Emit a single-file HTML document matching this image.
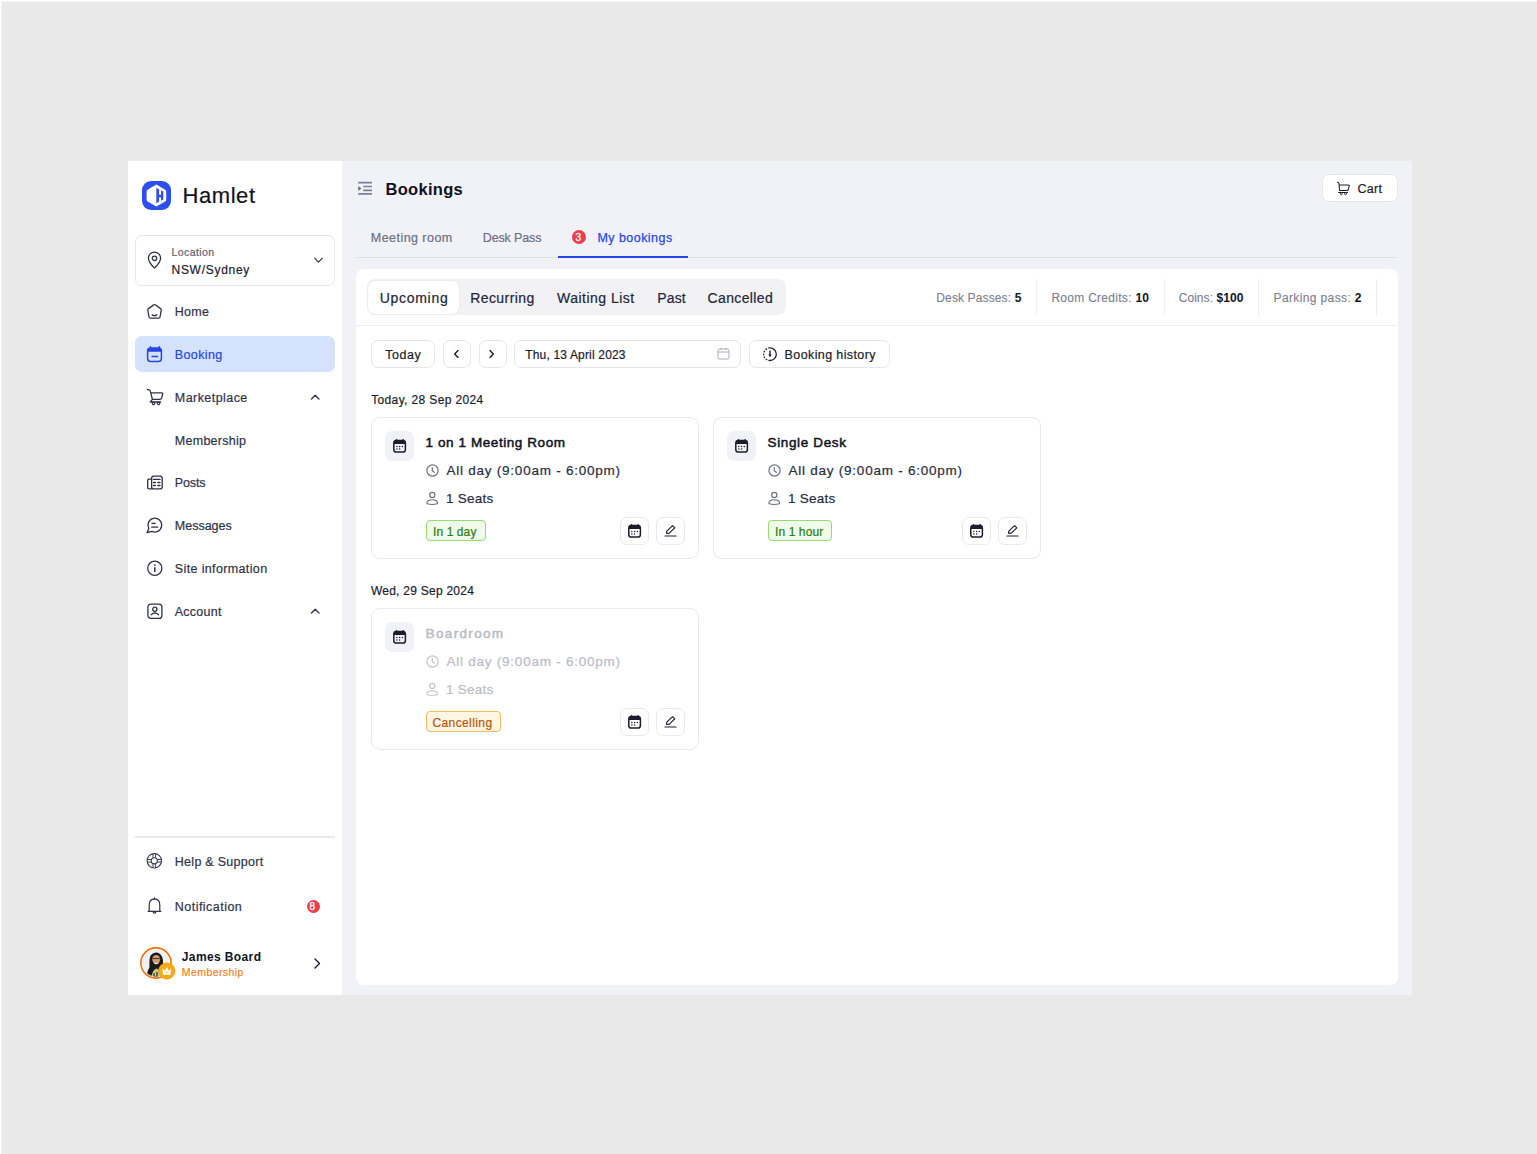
<!DOCTYPE html>
<html><head><meta charset="utf-8">
<style>
*{box-sizing:border-box;margin:0;padding:0}
html,body{width:1537px;height:1154px;overflow:hidden}
body{background:#e9e9e9;font-family:"Liberation Sans",sans-serif;position:relative}
.abs{position:absolute}
.t{position:absolute;white-space:nowrap;line-height:1;-webkit-text-stroke:0.2px currentColor}
svg{position:absolute;overflow:visible}
</style></head><body>
<div class="abs" style="left:0px;top:0px;width:1537px;height:1px;background:#ffffff;"></div>
<div class="abs" style="left:0px;top:1px;width:1537px;height:1px;background:#f4f4f4;"></div>
<div class="abs" style="left:0px;top:0px;width:1px;height:1154px;background:#ffffff;"></div>
<div class="abs" style="left:1px;top:1px;width:1px;height:1153px;background:#f4f4f4;"></div>
<div class="abs" style="left:128px;top:161px;width:214px;height:834px;background:#ffffff;"></div>
<div class="abs" style="left:342px;top:161px;width:1070px;height:834px;background:#f1f2f8;"></div>
<svg style="left:142px;top:181px" width="29" height="29" viewBox="0 0 29 29" fill="none"><rect x="0" y="0" width="29" height="29" rx="9" fill="#2e4ff0"/>
<path d="M14.4 3.6 L23.2 8.7 Q24.2 9.3 24.2 10.4 L24.2 18.7 Q24.2 19.8 23.2 20.4 L14.4 25.5 L5.6 20.4 Q4.6 19.8 4.6 18.7 L4.6 10.4 Q4.6 9.3 5.6 8.7 Z" fill="#fff"/>
<path d="M14.3 6.8 L17.1 8.4 L17.1 20.6 L14.3 22.2 Z" fill="#2e4ff0"/>
<path d="M19 9.4 L21.3 10.6 L21.3 18.6 L19 19.8 Z" fill="#2e4ff0"/>
<rect x="16.5" y="13.8" width="3" height="2.6" fill="#2e4ff0"/></svg>
<div class="t" style="left:182.5px;top:184.98px;font-size:22px;color:#111322;letter-spacing:0.563px;">Hamlet</div>
<div class="abs" style="left:135px;top:235px;width:200px;height:51px;background:#fff;border:1px solid #e6e7ee;border-radius:7px;"></div>
<svg style="left:147px;top:251px" width="15" height="18" viewBox="0 0 15 18" fill="none"><path d="M7.5 17 C7.5 17 13.6 11.2 13.6 7.2 A6.1 6.1 0 0 0 1.4 7.2 C1.4 11.2 7.5 17 7.5 17Z" stroke="#2f3245" stroke-width="1.3" stroke-linejoin="round"/>
<circle cx="7.5" cy="7.3" r="2.2" stroke="#2f3245" stroke-width="1.3"/></svg>
<div class="t" style="left:171.5px;top:246.51px;font-size:10.5px;color:#5c5f72;letter-spacing:0.429px;">Location</div>
<div class="t" style="left:171.5px;top:263.74px;font-size:12px;color:#1b1d2c;letter-spacing:0.716px;">NSW/Sydney</div>
<svg style="left:313px;top:256px" width="11" height="9" viewBox="0 0 11 9" fill="none"><path d="M1.7 2.2 L5.5 6.2 L9.3 2.2" stroke="#2f3245" stroke-width="1.1" stroke-linecap="round" stroke-linejoin="round"/></svg>
<div class="abs" style="left:135px;top:336px;width:200px;height:36px;background:#d5e2fd;border-radius:7px;"></div>
<div class="t" style="left:174.8px;top:306.22px;font-size:12.5px;color:#2f3245;letter-spacing:0.286px;">Home</div>
<div class="t" style="left:174.8px;top:348.92px;font-size:12.5px;color:#2545e6;letter-spacing:0.372px;">Booking</div>
<div class="t" style="left:174.8px;top:391.72px;font-size:12.5px;color:#2f3245;letter-spacing:0.442px;">Marketplace</div>
<div class="t" style="left:174.8px;top:434.52px;font-size:12.5px;color:#2f3245;letter-spacing:0.270px;">Membership</div>
<div class="t" style="left:174.8px;top:477.32px;font-size:12.5px;color:#2f3245;letter-spacing:-0.116px;">Posts</div>
<div class="t" style="left:174.8px;top:520.12px;font-size:12.5px;color:#2f3245;">Messages</div>
<div class="t" style="left:174.8px;top:562.92px;font-size:12.5px;color:#2f3245;letter-spacing:0.364px;">Site information</div>
<div class="t" style="left:174.8px;top:605.72px;font-size:12.5px;color:#2f3245;letter-spacing:0.239px;">Account</div>
<div class="t" style="left:174.8px;top:856.02px;font-size:12.5px;color:#2f3245;letter-spacing:0.279px;">Help &amp; Support</div>
<div class="t" style="left:174.8px;top:900.62px;font-size:12.5px;color:#2f3245;letter-spacing:0.470px;">Notification</div>
<svg style="left:146px;top:303px" width="17" height="17" viewBox="0 0 17 17" fill="none"><path d="M7.3 2.1 Q8.5 1.2 9.7 2.1 L14.5 5.6 Q15.4 6.3 15.2 7.4 L14 14 Q13.8 15.1 12.7 15.1 L4.3 15.1 Q3.2 15.1 3 14 L1.8 7.4 Q1.6 6.3 2.5 5.6 Z" stroke="#2f3245" stroke-width="1.3" stroke-linejoin="round"/><path d="M6.2 11.9 Q8.5 13.4 10.8 11.9" stroke="#2f3245" stroke-width="1.3" stroke-linecap="round" stroke-linejoin="round"/></svg>
<svg style="left:146px;top:346px" width="17" height="17" viewBox="0 0 17 17" fill="none"><rect x="1.6" y="1.9" width="13.8" height="13.6" rx="3" stroke="#2545e6" stroke-width="1.5"/>
<path d="M1.6 4.9 Q1.6 1.9 4.6 1.9 L12.4 1.9 Q15.4 1.9 15.4 4.9 L15.4 5.8 L1.6 5.8 Z" fill="#2545e6"/>
<rect x="3.7" y="0" width="1.5" height="3" rx=".7" fill="#2545e6"/><rect x="12.6" y="0" width="1.5" height="3" rx=".7" fill="#2545e6"/>
<path d="M6 10.5 L11.6 10.5" stroke="#2545e6" stroke-width="1.4" stroke-linecap="round"/></svg>
<svg style="left:146px;top:388px" width="18" height="18" viewBox="0 0 18 18" fill="none"><path d="M1.3 1.6 Q4.2 1.2 4.5 3.9 L6.4 11.4 M5 4.8 L15.8 4.8 Q17 4.9 16.6 6.3 L15.8 9.6 Q15.3 11.4 13.7 11.4 L6.4 11.4 L4.3 14 L14.6 14" stroke="#2f3245" stroke-width="1.3" stroke-linecap="round" stroke-linejoin="round"/><circle cx="7.6" cy="15.4" r="1.2" stroke="#2f3245" stroke-width="1.2" fill="#fff"/><circle cx="12.6" cy="15.4" r="1.2" stroke="#2f3245" stroke-width="1.2" fill="#fff"/></svg>
<svg style="left:310px;top:393px" width="11" height="8" viewBox="0 0 11 8" fill="none"><path d="M1.5 6 L5.2 2.2 L9 6" stroke="#2f3245" stroke-width="1.3" stroke-linecap="round" stroke-linejoin="round"/></svg>
<svg style="left:310px;top:607px" width="11" height="8" viewBox="0 0 11 8" fill="none"><path d="M1.5 6 L5.2 2.2 L9 6" stroke="#2f3245" stroke-width="1.3" stroke-linecap="round" stroke-linejoin="round"/></svg>
<svg style="left:146px;top:474px" width="18" height="17" viewBox="0 0 18 17" fill="none"><rect x="5.6" y="2.2" width="10.6" height="12.7" rx="2.2" stroke="#2f3245" stroke-width="1.3" stroke-linecap="round" stroke-linejoin="round"/><path d="M5.6 5.1 L3 5.1 Q1.7 5.1 1.7 6.4 L1.7 13.6 Q1.7 14.9 3.1 14.9 L5.6 14.9" stroke="#2f3245" stroke-width="1.3" stroke-linecap="round" stroke-linejoin="round"/><path d="M7.4 5.4 L14 5.4 M7.4 8.5 L9.5 8.5 M11.8 8.5 L14 8.5 M7.4 11.5 L9.5 11.5 M11.8 11.5 L14 11.5" stroke="#2f3245" stroke-width="1.3" stroke-linecap="round" stroke-linejoin="round"/></svg>
<svg style="left:146px;top:517px" width="18" height="17" viewBox="0 0 18 17" fill="none"><path d="M1.1 15.5 L2.82 11.55 A6.9 6.9 0 1 1 5.88 14.35 Z" stroke="#2f3245" stroke-width="1.3" stroke-linecap="round" stroke-linejoin="round"/><path d="M6.1 6.4 L9.2 6.4 M5.7 10.2 L11.7 10.2" stroke="#2f3245" stroke-width="1.3" stroke-linecap="round" stroke-linejoin="round"/></svg>
<svg style="left:146px;top:560px" width="17" height="17" viewBox="0 0 17 17" fill="none"><circle cx="8.8" cy="8.2" r="7.1" stroke="#2f3245" stroke-width="1.3" stroke-linecap="round" stroke-linejoin="round"/><path d="M8.8 7.7 L8.8 11.6" stroke="#2f3245" stroke-width="1.5" stroke-linecap="round"/><circle cx="8.8" cy="5.1" r=".85" fill="#2f3245"/></svg>
<svg style="left:146px;top:603px" width="17" height="17" viewBox="0 0 17 17" fill="none"><rect x="1.9" y="1.2" width="14" height="14.2" rx="3" stroke="#2f3245" stroke-width="1.3" stroke-linecap="round" stroke-linejoin="round"/><circle cx="8.8" cy="6.3" r="2.1" stroke="#2f3245" stroke-width="1.3" stroke-linecap="round" stroke-linejoin="round"/><path d="M5.2 11.7 Q8.8 8.4 12.5 11.7" stroke="#2f3245" stroke-width="1.3" stroke-linecap="round" stroke-linejoin="round"/></svg>
<div class="abs" style="left:135px;top:836px;width:200px;height:1.5px;background:#e8e9ee;"></div>
<svg style="left:146px;top:852px" width="17" height="17" viewBox="0 0 17 17" fill="none"><circle cx="8.3" cy="8.8" r="7.2" stroke="#3a3d52" stroke-width="1.15"/><circle cx="8.3" cy="8.8" r="3.1" stroke="#3a3d52" stroke-width="1.15"/><path d="M7 1.7 L7 5.8 M9.6 1.7 L9.6 5.8 M7 11.8 L7 15.9 M9.6 11.8 L9.6 15.9 M1.2 7.5 L5.3 7.5 M1.2 10.1 L5.3 10.1 M11.3 7.5 L15.4 7.5 M11.3 10.1 L15.4 10.1" stroke="#3a3d52" stroke-width="1"/></svg>
<svg style="left:147px;top:897px" width="15" height="18" viewBox="0 0 15 18" fill="none"><path d="M7.5 1.8 Q12.8 2 12.8 8 L12.8 13.6 L13.8 14.4 L1.2 14.4 L2.2 13.6 L2.2 8 Q2.2 2 7.5 1.8 Z" stroke="#2f3245" stroke-width="1.2" stroke-linejoin="round"/><path d="M7.5 0.9 L7.5 1.9" stroke="#2f3245" stroke-width="1.2" stroke-linecap="round"/><path d="M6 14.9 Q7.5 17.4 9 14.9" stroke="#2f3245" stroke-width="1.1"/></svg>
<div class="abs" style="left:306.5px;top:899.5px;width:13px;height:13px;background:#ef3b4b;border-radius:7px;"></div>
<div class="t" style="left:309.6px;top:901.53px;font-size:10px;color:#ffffff;-webkit-text-stroke:0.3px #fff;">8</div>
<svg style="left:140px;top:946.5px" width="32" height="32" viewBox="0 0 32 32" fill="none"><defs><clipPath id="av"><circle cx="16" cy="16" r="13.6"/></clipPath></defs>
<circle cx="16" cy="16" r="15.1" fill="#fff" stroke="#f3700c" stroke-width="1.6"/>
<g clip-path="url(#av)"><rect width="32" height="32" fill="#eef0f2"/>
<path d="M6 32 Q7 24 9.5 20 Q9 12 10.5 8.5 Q15 3.5 20 7 Q23.5 10 23 17 Q25 21 25.5 32 Z" fill="#1c1a1a"/>
<ellipse cx="16.2" cy="12.6" rx="3.9" ry="4.6" fill="#d39a72"/>
<path d="M12.6 11.6 L19.8 11.6" stroke="#3a3330" stroke-width="1"/>
<path d="M14 16 Q16.2 17.6 18.4 16" stroke="#fff" stroke-width=".9"/>
<path d="M11 32 Q12 23 16.5 21.5 Q20 22.5 21 32 Z" fill="#c7c98a"/>
<path d="M14 26 L14 32 M17 25 L17 32" stroke="#2a2a24" stroke-width="1.2"/></g></svg>
<svg style="left:157.5px;top:962px" width="18" height="18" viewBox="0 0 18 18" fill="none"><circle cx="8.8" cy="9" r="8.6" fill="#f9a818"/><path d="M5.2 12.4 L4.8 7.2 L7.3 9 L8.8 5.6 L10.3 9 L12.8 7.2 L12.4 12.4 Z" fill="#fff" stroke="#fff" stroke-width=".6" stroke-linejoin="round"/><circle cx="8.8" cy="10.3" r=".8" fill="#f9a818"/></svg>
<div class="t" style="left:181.8px;top:950.64px;font-size:12px;color:#111322;font-weight:bold;-webkit-text-stroke:0;letter-spacing:0.383px;">James Board</div>
<div class="t" style="left:181.8px;top:966.91px;font-size:10.5px;color:#f0841a;letter-spacing:0.426px;">Membership</div>
<svg style="left:312px;top:957px" width="10" height="13" viewBox="0 0 10 13" fill="none"><path d="M3 2 L7.5 6.5 L3 11" stroke="#111322" stroke-width="1.3" stroke-linecap="round" stroke-linejoin="round"/></svg>
<svg style="left:357px;top:181px" width="16" height="15" viewBox="0 0 16 15" fill="none"><path d="M1.2 1.7 L15 1.7 M6.2 5.5 L15 5.5 M6.2 9.3 L15 9.3 M1.2 12.9 L15 12.9" stroke="#7b7f93" stroke-width="1.7"/><path d="M1.2 4.9 L4.5 7.4 L1.2 9.9 Z" fill="#6b6f83"/></svg>
<div class="t" style="left:385.5px;top:181.03px;font-size:16.5px;color:#0f1120;font-weight:bold;-webkit-text-stroke:0;letter-spacing:0.291px;">Bookings</div>
<div class="abs" style="left:1322.3px;top:174.2px;width:75.3px;height:28px;background:#ffffff;border:1px solid #e6e7ee;border-radius:7px;"></div>
<svg style="left:1336px;top:181px" width="15" height="15" viewBox="0 0 15 15" fill="none"><path d="M1.3 1.3 Q2.7 1.2 3 2.8 L3.6 9.6 M3.2 4 L12.6 4 Q13.5 4.1 13.2 5 L12.5 8 Q12.1 9.5 10.6 9.5 L3.6 9.5 M2.6 11.4 L11.6 11.4" stroke="#1b1d2c" stroke-width="1.05" stroke-linecap="round" stroke-linejoin="round"/><circle cx="5.3" cy="12.7" r="1" stroke="#1b1d2c" stroke-width=".9"/><circle cx="9.5" cy="12.7" r="1" stroke="#1b1d2c" stroke-width=".9"/></svg>
<div class="t" style="left:1357.4px;top:183.02px;font-size:12.5px;color:#1b1d2c;letter-spacing:0.329px;">Cart</div>
<div class="t" style="left:370.8px;top:232.22px;font-size:12.5px;color:#6c6f82;letter-spacing:0.453px;">Meeting room</div>
<div class="t" style="left:482.8px;top:232.22px;font-size:12.5px;color:#6c6f82;letter-spacing:-0.143px;">Desk Pass</div>
<div class="abs" style="left:571.5px;top:230px;width:14px;height:14px;background:#ef3b4b;border-radius:7px;"></div>
<div class="t" style="left:575.6px;top:232.53px;font-size:10px;color:#ffffff;-webkit-text-stroke:0.3px #fff;">3</div>
<div class="t" style="left:597.4px;top:232.22px;font-size:12.5px;color:#2545e6;letter-spacing:0.463px;-webkit-text-stroke:0.25px #2b4de8;">My bookings</div>
<div class="abs" style="left:356px;top:257px;width:1041px;height:1px;background:#dfe0e7;"></div>
<div class="abs" style="left:558px;top:256px;width:130px;height:2px;background:#2545e6;"></div>
<div class="abs" style="left:356px;top:269px;width:1042px;height:716px;background:#ffffff;border-radius:8px;"></div>
<div class="abs" style="left:367px;top:279px;width:419px;height:36px;background:#f2f2f5;border-radius:8px;"></div>
<div class="abs" style="left:368px;top:281px;width:91px;height:33px;background:#ffffff;border-radius:7px;box-shadow:0 0 0 1px #ececf0;"></div>
<div class="t" style="left:379.7px;top:291.35px;font-size:14px;color:#23263a;letter-spacing:0.710px;">Upcoming</div>
<div class="t" style="left:470.2px;top:291.35px;font-size:14px;color:#23263a;letter-spacing:0.426px;">Recurring</div>
<div class="t" style="left:557.0px;top:291.35px;font-size:14px;color:#23263a;letter-spacing:0.487px;">Waiting List</div>
<div class="t" style="left:657.3px;top:291.35px;font-size:14px;color:#23263a;letter-spacing:0.129px;">Past</div>
<div class="t" style="left:707.5px;top:291.35px;font-size:14px;color:#23263a;letter-spacing:0.380px;">Cancelled</div>
<div class="t" style="left:936.3px;top:291.54px;font-size:12px;color:#7a7d8f;letter-spacing:0.126px;-webkit-text-stroke:0.1px #7a7d8f">Desk Passes: <b style="color:#111322">5</b></div>
<div class="t" style="left:1051.4px;top:291.54px;font-size:12px;color:#7a7d8f;letter-spacing:0.282px;-webkit-text-stroke:0.1px #7a7d8f">Room Credits: <b style="color:#111322">10</b></div>
<div class="t" style="left:1178.7px;top:291.54px;font-size:12px;color:#7a7d8f;letter-spacing:0.056px;-webkit-text-stroke:0.1px #7a7d8f">Coins: <b style="color:#111322">$100</b></div>
<div class="t" style="left:1273.5px;top:291.54px;font-size:12px;color:#7a7d8f;letter-spacing:0.378px;-webkit-text-stroke:0.1px #7a7d8f">Parking pass: <b style="color:#111322">2</b></div>
<div class="abs" style="left:1036px;top:279px;width:1px;height:36px;background:#ececf1;"></div>
<div class="abs" style="left:1164px;top:279px;width:1px;height:36px;background:#ececf1;"></div>
<div class="abs" style="left:1258px;top:279px;width:1px;height:36px;background:#ececf1;"></div>
<div class="abs" style="left:1376px;top:279px;width:1px;height:36px;background:#ececf1;"></div>
<div class="abs" style="left:356px;top:325px;width:1041px;height:1px;background:#ededf2;"></div>
<div class="abs" style="left:371px;top:340px;width:64px;height:28px;background:#fff;border:1px solid #e6e7ee;border-radius:7px;"></div>
<div class="t" style="left:385.3px;top:349.02px;font-size:12.5px;color:#1b1d2c;letter-spacing:0.511px;">Today</div>
<div class="abs" style="left:443px;top:340px;width:28px;height:28px;background:#fff;border:1px solid #e6e7ee;border-radius:7px;"></div>
<div class="abs" style="left:478.5px;top:340px;width:28px;height:28px;background:#fff;border:1px solid #e6e7ee;border-radius:7px;"></div>
<svg style="left:452px;top:349px" width="8" height="10" viewBox="0 0 8 10" fill="none"><path d="M6 1.5 L2.7 5 L6 8.5" stroke="#1b1d2c" stroke-width="1.4" stroke-linecap="round" stroke-linejoin="round"/></svg>
<svg style="left:488px;top:349px" width="8" height="10" viewBox="0 0 8 10" fill="none"><path d="M2 1.5 L5.3 5 L2 8.5" stroke="#1b1d2c" stroke-width="1.4" stroke-linecap="round" stroke-linejoin="round"/></svg>
<div class="abs" style="left:514px;top:340px;width:227px;height:28px;background:#fff;border:1px solid #e6e7ee;border-radius:7px;"></div>
<div class="t" style="left:525.2px;top:349.24px;font-size:12px;color:#1b1d2c;letter-spacing:0.171px;">Thu, 13 April 2023</div>
<svg style="left:717px;top:347px" width="13" height="13" viewBox="0 0 13 13" fill="none"><rect x="1" y="2" width="11" height="10" rx="1.5" stroke="#a9abb8" stroke-width="1"/><path d="M1 5 L12 5 M4 0.8 L4 3 M9 0.8 L9 3" stroke="#a9abb8" stroke-width="1"/></svg>
<div class="abs" style="left:749px;top:340px;width:141px;height:28px;background:#fff;border:1px solid #e6e7ee;border-radius:7px;"></div>
<svg style="left:763px;top:347px" width="15" height="15" viewBox="0 0 15 15" fill="none"><path d="M7 0.9 A6.3 6.3 0 0 1 7 13.5" stroke="#1b1d2c" stroke-width="1.3"/><path d="M7 13.5 A6.3 6.3 0 0 1 7 0.9" stroke="#1b1d2c" stroke-width="1.3" stroke-dasharray="1.6 1.3"/><path d="M7 4 L7 8.8" stroke="#1b1d2c" stroke-width="1.4" stroke-linecap="round"/><path d="M5.4 7.6 L7 10 L8.6 7.6 Z" fill="#1b1d2c"/></svg>
<div class="t" style="left:784.6px;top:348.82px;font-size:12.5px;color:#1b1d2c;letter-spacing:0.389px;">Booking history</div>
<div class="t" style="left:371.2px;top:393.74px;font-size:12px;color:#1b1d2c;letter-spacing:0.361px;">Today, 28 Sep 2024</div>
<div class="t" style="left:370.9px;top:585.34px;font-size:12px;color:#1b1d2c;letter-spacing:0.254px;">Wed, 29 Sep 2024</div>
<div class="abs" style="left:371px;top:417px;width:328px;height:142px;background:#fff;border:1px solid #e8e9ee;border-radius:9px;"></div>
<div class="abs" style="left:385px;top:431px;width:29.3px;height:29.8px;background:#f1f2f8;border-radius:7px;"></div>
<svg style="left:393px;top:439px" width="14" height="14" viewBox="0 0 14 14" fill="none"><rect x="0.8" y="1.6" width="11.6" height="11.5" rx="2.6" stroke="#1b1d2c" stroke-width="1.5"/>
<path d="M0.8 4.2 Q0.8 1.6 3.4 1.6 L9.8 1.6 Q12.4 1.6 12.4 4.2 L12.4 5 L0.8 5 Z" fill="#1b1d2c"/>
<rect x="2.8" y="0" width="1.3" height="2.6" rx=".6" fill="#1b1d2c"/><rect x="9.6" y="0" width="1.3" height="2.6" rx=".6" fill="#1b1d2c"/>
<circle cx="3.9" cy="7.4" r=".75" fill="#1b1d2c"/><circle cx="6.6" cy="7.4" r=".75" fill="#1b1d2c"/><circle cx="9.3" cy="7.4" r=".75" fill="#1b1d2c"/>
<circle cx="3.9" cy="10" r=".75" fill="#1b1d2c"/><circle cx="6.6" cy="10" r=".75" fill="#1b1d2c"/></svg>
<div class="t" style="left:425.6px;top:435.57px;font-size:13.5px;color:#111322;letter-spacing:0.574px;-webkit-text-stroke:0.5px currentColor;">1 on 1 Meeting Room</div>
<svg style="left:426px;top:463.5px" width="13" height="13" viewBox="0 0 13 13" fill="none"><circle cx="6.5" cy="6.5" r="5.6" stroke="#6c6f82" stroke-width="1.2"/><path d="M6.3 3.6 L6.3 6.8 L8.2 8.3" stroke="#6c6f82" stroke-width="1.2" stroke-linecap="round"/></svg>
<div class="t" style="left:446.5px;top:463.97px;font-size:13.5px;color:#2a2d40;letter-spacing:0.758px;">All day (9:00am - 6:00pm)</div>
<svg style="left:426px;top:492.3px" width="13" height="13" viewBox="0 0 13 13" fill="none"><circle cx="6.3" cy="3" r="2.6" stroke="#6c6f82" stroke-width="1.15"/><path d="M0.9 10.7 Q1.4 7.7 6.2 7.7 Q11 7.7 11.6 10.7 Q11.8 12.5 6.2 12.5 Q0.7 12.5 0.9 10.7 Z" stroke="#6c6f82" stroke-width="1.15"/></svg>
<div class="t" style="left:446.1px;top:492.27px;font-size:13.5px;color:#2a2d40;letter-spacing:0.237px;">1 Seats</div>
<div class="abs" style="left:425.5px;top:520px;width:60px;height:21px;background:#f0fce9;border:1px solid #93de73;border-radius:4px;"></div>
<div class="t" style="left:433.0px;top:525.54px;font-size:12px;color:#2a7c16;letter-spacing:0.100px;">In 1 day</div>
<div class="abs" style="left:620.3px;top:516.5px;width:28.5px;height:28.5px;background:#fff;border:1px solid #e8e9ee;border-radius:7px;"></div>
<svg style="left:627.5px;top:523.5px" width="14" height="14" viewBox="0 0 14 14" fill="none"><rect x="0.8" y="1.6" width="11.6" height="11.5" rx="2.6" stroke="#1b1d2c" stroke-width="1.5"/>
<path d="M0.8 4.2 Q0.8 1.6 3.4 1.6 L9.8 1.6 Q12.4 1.6 12.4 4.2 L12.4 5 L0.8 5 Z" fill="#1b1d2c"/>
<rect x="2.8" y="0" width="1.3" height="2.6" rx=".6" fill="#1b1d2c"/><rect x="9.6" y="0" width="1.3" height="2.6" rx=".6" fill="#1b1d2c"/>
<circle cx="3.9" cy="7.4" r=".75" fill="#1b1d2c"/><circle cx="6.6" cy="7.4" r=".75" fill="#1b1d2c"/><circle cx="9.3" cy="7.4" r=".75" fill="#1b1d2c"/>
<circle cx="3.9" cy="10" r=".75" fill="#1b1d2c"/><circle cx="6.6" cy="10" r=".75" fill="#1b1d2c"/></svg>
<div class="abs" style="left:656px;top:516.5px;width:28.5px;height:28.5px;background:#fff;border:1px solid #e8e9ee;border-radius:7px;"></div>
<svg style="left:663px;top:524px" width="14" height="14" viewBox="0 0 14 14" fill="none"><path d="M3.5 9.2 L3.8 7.2 L9.6 1.6 L11.8 3.8 L6 9.4 Z" stroke="#1b1d2c" stroke-width="1.15" stroke-linejoin="round"/><path d="M2 12 L13 12" stroke="#1b1d2c" stroke-width="1.2" stroke-linecap="round"/></svg>
<div class="abs" style="left:713px;top:417px;width:328px;height:142px;background:#fff;border:1px solid #e8e9ee;border-radius:9px;"></div>
<div class="abs" style="left:727px;top:431px;width:29.3px;height:29.8px;background:#f1f2f8;border-radius:7px;"></div>
<svg style="left:735px;top:439px" width="14" height="14" viewBox="0 0 14 14" fill="none"><rect x="0.8" y="1.6" width="11.6" height="11.5" rx="2.6" stroke="#1b1d2c" stroke-width="1.5"/>
<path d="M0.8 4.2 Q0.8 1.6 3.4 1.6 L9.8 1.6 Q12.4 1.6 12.4 4.2 L12.4 5 L0.8 5 Z" fill="#1b1d2c"/>
<rect x="2.8" y="0" width="1.3" height="2.6" rx=".6" fill="#1b1d2c"/><rect x="9.6" y="0" width="1.3" height="2.6" rx=".6" fill="#1b1d2c"/>
<circle cx="3.9" cy="7.4" r=".75" fill="#1b1d2c"/><circle cx="6.6" cy="7.4" r=".75" fill="#1b1d2c"/><circle cx="9.3" cy="7.4" r=".75" fill="#1b1d2c"/>
<circle cx="3.9" cy="10" r=".75" fill="#1b1d2c"/><circle cx="6.6" cy="10" r=".75" fill="#1b1d2c"/></svg>
<div class="t" style="left:767.6px;top:435.57px;font-size:13.5px;color:#111322;letter-spacing:0.626px;-webkit-text-stroke:0.5px currentColor;">Single Desk</div>
<svg style="left:768px;top:463.5px" width="13" height="13" viewBox="0 0 13 13" fill="none"><circle cx="6.5" cy="6.5" r="5.6" stroke="#6c6f82" stroke-width="1.2"/><path d="M6.3 3.6 L6.3 6.8 L8.2 8.3" stroke="#6c6f82" stroke-width="1.2" stroke-linecap="round"/></svg>
<div class="t" style="left:788.5px;top:463.97px;font-size:13.5px;color:#2a2d40;letter-spacing:0.758px;">All day (9:00am - 6:00pm)</div>
<svg style="left:768px;top:492.3px" width="13" height="13" viewBox="0 0 13 13" fill="none"><circle cx="6.3" cy="3" r="2.6" stroke="#6c6f82" stroke-width="1.15"/><path d="M0.9 10.7 Q1.4 7.7 6.2 7.7 Q11 7.7 11.6 10.7 Q11.8 12.5 6.2 12.5 Q0.7 12.5 0.9 10.7 Z" stroke="#6c6f82" stroke-width="1.15"/></svg>
<div class="t" style="left:788.1px;top:492.27px;font-size:13.5px;color:#2a2d40;letter-spacing:0.237px;">1 Seats</div>
<div class="abs" style="left:767.5px;top:520px;width:64px;height:21px;background:#f0fce9;border:1px solid #93de73;border-radius:4px;"></div>
<div class="t" style="left:775.0px;top:525.54px;font-size:12px;color:#2a7c16;letter-spacing:0.104px;">In 1 hour</div>
<div class="abs" style="left:962.3px;top:516.5px;width:28.5px;height:28.5px;background:#fff;border:1px solid #e8e9ee;border-radius:7px;"></div>
<svg style="left:969.5px;top:523.5px" width="14" height="14" viewBox="0 0 14 14" fill="none"><rect x="0.8" y="1.6" width="11.6" height="11.5" rx="2.6" stroke="#1b1d2c" stroke-width="1.5"/>
<path d="M0.8 4.2 Q0.8 1.6 3.4 1.6 L9.8 1.6 Q12.4 1.6 12.4 4.2 L12.4 5 L0.8 5 Z" fill="#1b1d2c"/>
<rect x="2.8" y="0" width="1.3" height="2.6" rx=".6" fill="#1b1d2c"/><rect x="9.6" y="0" width="1.3" height="2.6" rx=".6" fill="#1b1d2c"/>
<circle cx="3.9" cy="7.4" r=".75" fill="#1b1d2c"/><circle cx="6.6" cy="7.4" r=".75" fill="#1b1d2c"/><circle cx="9.3" cy="7.4" r=".75" fill="#1b1d2c"/>
<circle cx="3.9" cy="10" r=".75" fill="#1b1d2c"/><circle cx="6.6" cy="10" r=".75" fill="#1b1d2c"/></svg>
<div class="abs" style="left:998px;top:516.5px;width:28.5px;height:28.5px;background:#fff;border:1px solid #e8e9ee;border-radius:7px;"></div>
<svg style="left:1005px;top:524px" width="14" height="14" viewBox="0 0 14 14" fill="none"><path d="M3.5 9.2 L3.8 7.2 L9.6 1.6 L11.8 3.8 L6 9.4 Z" stroke="#1b1d2c" stroke-width="1.15" stroke-linejoin="round"/><path d="M2 12 L13 12" stroke="#1b1d2c" stroke-width="1.2" stroke-linecap="round"/></svg>
<div class="abs" style="left:371px;top:608px;width:328px;height:142px;background:#fff;border:1px solid #e8e9ee;border-radius:9px;"></div>
<div class="abs" style="left:385px;top:622px;width:29.3px;height:29.8px;background:#f1f2f8;border-radius:7px;"></div>
<svg style="left:393px;top:630px" width="14" height="14" viewBox="0 0 14 14" fill="none"><rect x="0.8" y="1.6" width="11.6" height="11.5" rx="2.6" stroke="#1b1d2c" stroke-width="1.5"/>
<path d="M0.8 4.2 Q0.8 1.6 3.4 1.6 L9.8 1.6 Q12.4 1.6 12.4 4.2 L12.4 5 L0.8 5 Z" fill="#1b1d2c"/>
<rect x="2.8" y="0" width="1.3" height="2.6" rx=".6" fill="#1b1d2c"/><rect x="9.6" y="0" width="1.3" height="2.6" rx=".6" fill="#1b1d2c"/>
<circle cx="3.9" cy="7.4" r=".75" fill="#1b1d2c"/><circle cx="6.6" cy="7.4" r=".75" fill="#1b1d2c"/><circle cx="9.3" cy="7.4" r=".75" fill="#1b1d2c"/>
<circle cx="3.9" cy="10" r=".75" fill="#1b1d2c"/><circle cx="6.6" cy="10" r=".75" fill="#1b1d2c"/></svg>
<div class="t" style="left:425.6px;top:626.57px;font-size:13.5px;color:#b9bbc6;letter-spacing:1.340px;-webkit-text-stroke:0.5px currentColor;">Boardroom</div>
<svg style="left:426px;top:654.5px" width="13" height="13" viewBox="0 0 13 13" fill="none"><circle cx="6.5" cy="6.5" r="5.6" stroke="#c4c6cf" stroke-width="1.2"/><path d="M6.3 3.6 L6.3 6.8 L8.2 8.3" stroke="#c4c6cf" stroke-width="1.2" stroke-linecap="round"/></svg>
<div class="t" style="left:446.5px;top:654.97px;font-size:13.5px;color:#b9bbc6;letter-spacing:0.758px;">All day (9:00am - 6:00pm)</div>
<svg style="left:426px;top:683.3px" width="13" height="13" viewBox="0 0 13 13" fill="none"><circle cx="6.3" cy="3" r="2.6" stroke="#c4c6cf" stroke-width="1.15"/><path d="M0.9 10.7 Q1.4 7.7 6.2 7.7 Q11 7.7 11.6 10.7 Q11.8 12.5 6.2 12.5 Q0.7 12.5 0.9 10.7 Z" stroke="#c4c6cf" stroke-width="1.15"/></svg>
<div class="t" style="left:446.1px;top:683.27px;font-size:13.5px;color:#b9bbc6;letter-spacing:0.237px;">1 Seats</div>
<div class="abs" style="left:425.5px;top:711px;width:75px;height:21px;background:#fff5e3;border:1px solid #f4b860;border-radius:4px;"></div>
<div class="t" style="left:432.4px;top:716.54px;font-size:12px;color:#b4560e;letter-spacing:0.408px;">Cancelling</div>
<div class="abs" style="left:620.3px;top:707.5px;width:28.5px;height:28.5px;background:#fff;border:1px solid #e8e9ee;border-radius:7px;"></div>
<svg style="left:627.5px;top:714.5px" width="14" height="14" viewBox="0 0 14 14" fill="none"><rect x="0.8" y="1.6" width="11.6" height="11.5" rx="2.6" stroke="#1b1d2c" stroke-width="1.5"/>
<path d="M0.8 4.2 Q0.8 1.6 3.4 1.6 L9.8 1.6 Q12.4 1.6 12.4 4.2 L12.4 5 L0.8 5 Z" fill="#1b1d2c"/>
<rect x="2.8" y="0" width="1.3" height="2.6" rx=".6" fill="#1b1d2c"/><rect x="9.6" y="0" width="1.3" height="2.6" rx=".6" fill="#1b1d2c"/>
<circle cx="3.9" cy="7.4" r=".75" fill="#1b1d2c"/><circle cx="6.6" cy="7.4" r=".75" fill="#1b1d2c"/><circle cx="9.3" cy="7.4" r=".75" fill="#1b1d2c"/>
<circle cx="3.9" cy="10" r=".75" fill="#1b1d2c"/><circle cx="6.6" cy="10" r=".75" fill="#1b1d2c"/></svg>
<div class="abs" style="left:656px;top:707.5px;width:28.5px;height:28.5px;background:#fff;border:1px solid #e8e9ee;border-radius:7px;"></div>
<svg style="left:663px;top:715px" width="14" height="14" viewBox="0 0 14 14" fill="none"><path d="M3.5 9.2 L3.8 7.2 L9.6 1.6 L11.8 3.8 L6 9.4 Z" stroke="#1b1d2c" stroke-width="1.15" stroke-linejoin="round"/><path d="M2 12 L13 12" stroke="#1b1d2c" stroke-width="1.2" stroke-linecap="round"/></svg>
</body></html>
